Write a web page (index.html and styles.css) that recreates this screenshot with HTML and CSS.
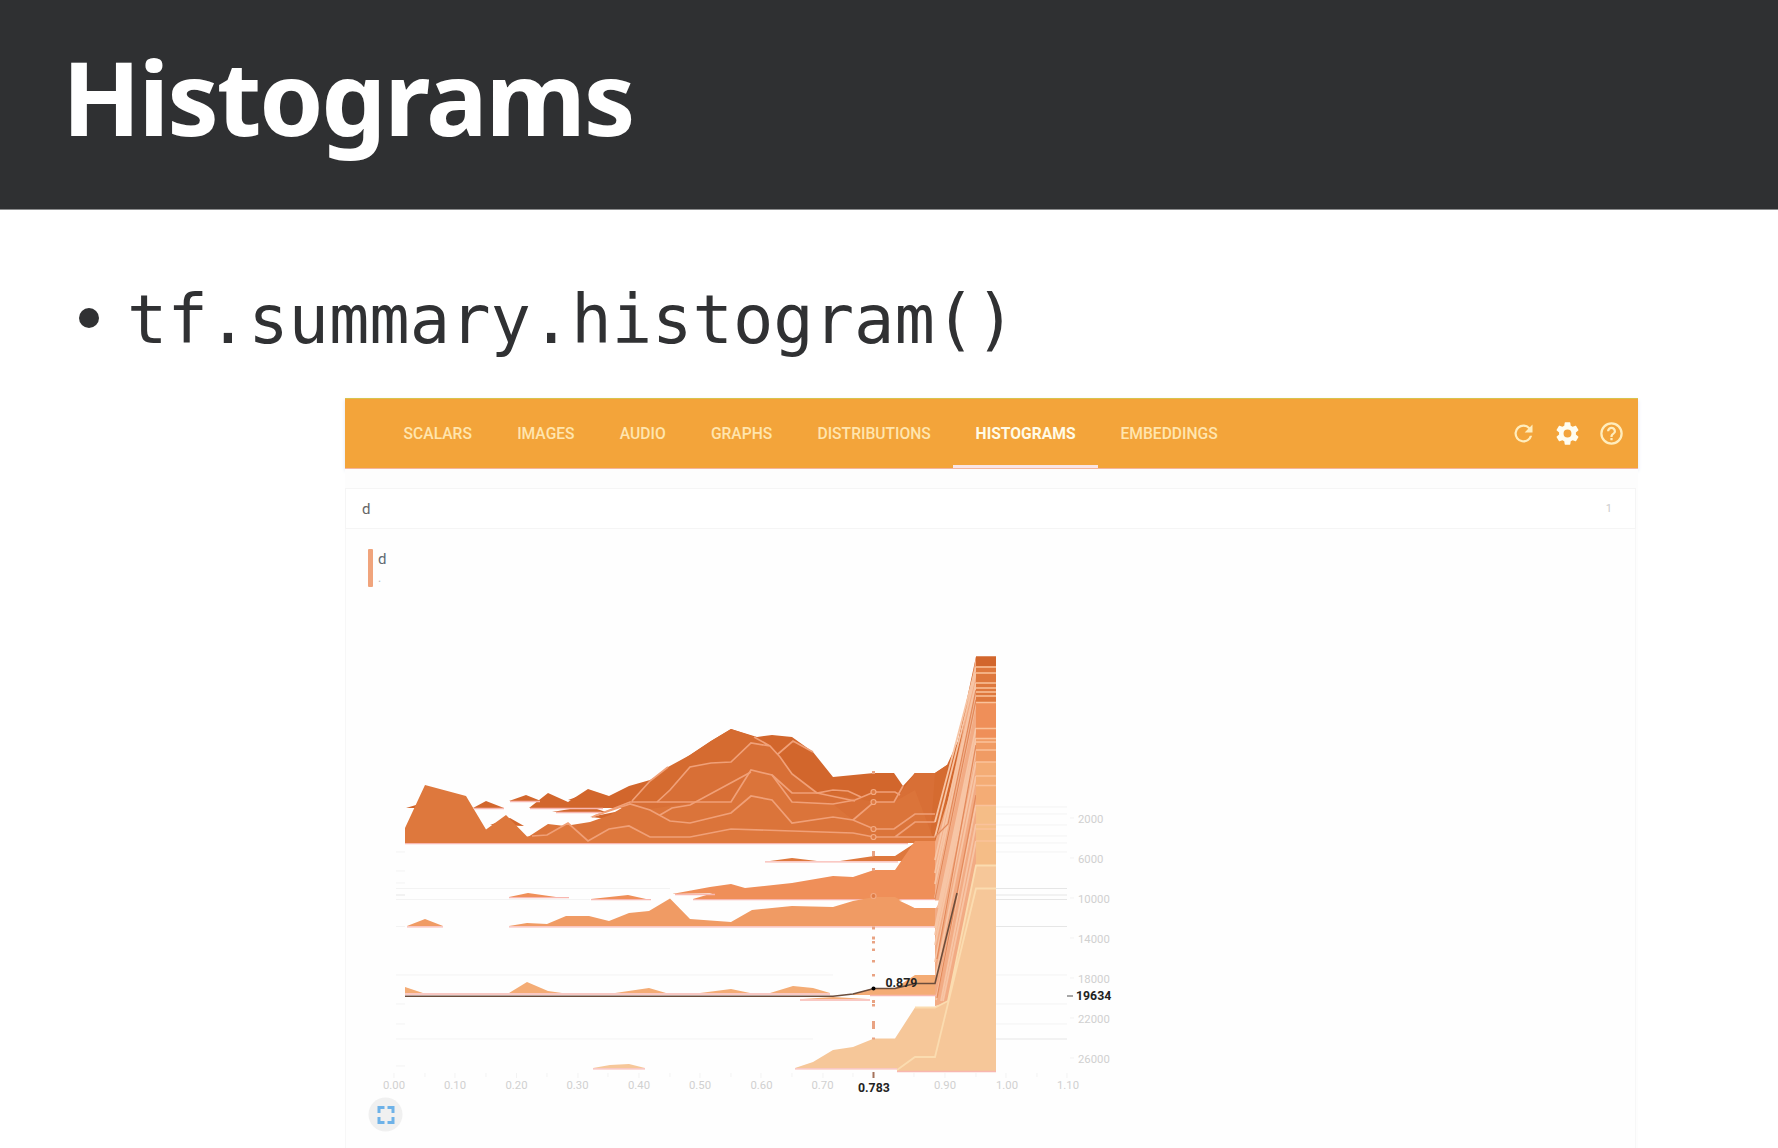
FILE: index.html
```html
<!DOCTYPE html>
<html lang="en">
<head>
<meta charset="utf-8">
<title>Histograms</title>
<link rel="stylesheet" href="styles.css">
</head>
<body>
<header class="slide-header"><h1 class="title">Histograms</h1></header>
<main class="slide">
  <div class="bullet"><span class="dot"></span><code class="code">tf.summary.histogram()</code></div>
  <section class="board">
    <nav class="toolbar">
      <div class="tabs">
        <span class="tab">SCALARS</span><span class="tab">IMAGES</span><span class="tab">AUDIO</span><span class="tab">GRAPHS</span><span class="tab">DISTRIBUTIONS</span><span class="tab active">HISTOGRAMS</span><span class="tab">EMBEDDINGS</span>
      </div>
      <div class="actions">
        <svg class="icon" viewBox="0 0 24 24"><path d="M17.65 6.35A7.96 7.96 0 0 0 12 4a8 8 0 1 0 7.73 10h-2.08A6 6 0 1 1 12 6c1.66 0 3.14.69 4.22 1.78L13 11h7V4z"/></svg>
        <svg class="icon bright" viewBox="0 0 24 24"><path d="M19.43 12.98c.04-.32.07-.64.07-.98s-.03-.66-.07-.98l2.11-1.65c.19-.15.24-.42.12-.64l-2-3.46c-.12-.22-.39-.3-.61-.22l-2.49 1c-.52-.4-1.08-.73-1.69-.98l-.38-2.65A.49.49 0 0 0 14 2h-4c-.25 0-.46.18-.49.42l-.38 2.65c-.61.25-1.17.59-1.69.98l-2.49-1c-.23-.09-.49 0-.61.22l-2 3.46c-.13.22-.07.49.12.64l2.11 1.65c-.04.32-.07.65-.07.98s.03.66.07.98l-2.11 1.65c-.19.15-.24.42-.12.64l2 3.46c.12.22.39.3.61.22l2.49-1c.52.4 1.08.73 1.69.98l.38 2.65c.03.24.24.42.49.42h4c.25 0 .46-.18.49-.42l.38-2.65c.61-.25 1.17-.59 1.69-.98l2.49 1c.23.09.49 0 .61-.22l2-3.46c.12-.22.07-.49-.12-.64zM12 15.5a3.5 3.5 0 1 1 0-7 3.5 3.5 0 0 1 0 7z"/></svg>
        <svg class="icon" viewBox="0 0 24 24"><path d="M11 18h2v-2h-2zm1-16a10 10 0 1 0 0 20 10 10 0 0 0 0-20zm0 18a8 8 0 1 1 0-16 8 8 0 0 1 0 16zm0-14a4 4 0 0 0-4 4h2c0-1.1.9-2 2-2s2 .9 2 2c0 2-3 1.75-3 5h2c0-2.25 3-2.5 3-5a4 4 0 0 0-4-4z"/></svg>
      </div>
    </nav>
    <div class="content">
      <div class="group"><span>d</span><span class="count">1</span></div>
      <div class="card">
        <div class="run"><span class="swatch"></span><div class="run-text"><span>d</span><span class="run-name">.</span></div></div>
        <svg class="chart" viewBox="346 580 1290 568">
          <g class="grid">
            <path d="M996 807H1067M996 814H1067M996 825H1067M996 836H1067M996 843H1067M996 852H1067M996 926.500H1067M996 975H1067M996 1004H1067M996 1024H1067M396 852h9M396 871h9M396 883h9M396 926.500h9M396 975h437M396 1004h9M396 1024h9M396 1039H813M396 1066h9"/>
            <path class="strong" d="M996 888.500H1067M996 895H1067M996 899.500H1067M996 926.500H1067M996 1039H1067M396 888.500h9M396 895h9M396 899.500h9"/>
            <path d="M396 888.500H670M396 899.500H590M1070 818h4M1070 858h4M1070 898h4M1070 938h4M1070 978h4M1070 1018h4M1070 1058h4"/>
            <path d="M394 1073v5M425 1073v4M455 1073v5M486 1073v4M516.500 1073v5M547 1073v4M578 1073v5M608 1073v4M639 1073v5M670 1073v4M700 1073v5M731 1073v4M761 1073v5M792 1073v4M823 1073v5M853 1073v4M914 1073v4M945 1073v5M976 1073v4M1006 1073v5M1037 1073v4M1067 1073v5"/>
          </g>
          <g class="mass">
            <path class="c1" d="M509 801l17-6 15 6zM473 808l13-7 18 7zM406 808l20-6v6zM529 808L548 793 568 802 588 789 609 796 629 786 650 780 672 767 690 755 711 741 731 729 757 737 772 735 792 737 813 752 833 777 874 773 894 773 903 786 915 773 935 773 947 765 958 741 976 656.500H996V843H630V808z"/>
            <path class="c1" d="M568 800l20-7-6 9zM552 812l36-6 18 6zM490 825l34 1-14-8zM590 817l40-8v12z"/>
            <path class="c2" d="M632 801L650 781 668 767 690 755 711 741 731 729 752 736 770 746 792 772 817 793 848 791 861 797 874 792H900L915 773H935L947 765 945 843H632z"/>
            <path class="c3" d="M630 843V803L657 802 670 790 690 767 711 763 731 762 751 743 770 746 792 774 817 793 855 798 874 802H894L915 773H935L930 843z"/>
            <path class="c4" d="M528 837L548 824 565 826 590 822 610 815 630 803 650 809 690 803 731 802 751 771 772 775 792 802 833 804 853 820 874 802H894L915 790 935 843H528z"/>
            <path class="c5" d="M405 843V828L425 785 466 796 486 829.500 506 815 527 836.500 547 835 568 823 588 841 609 829 629 826 650 837H690L731 829 853 833 874 837H935V843z"/>
          </g>
          <g class="lines">
            <path d="M632 801L650 781 668 767M592 817L630 802 690 802 731 802 751 770 772 775 792 802 833 804 855 800 874 792H895L900 795"/>
            <path d="M657 802L670 790 690 767 711 763 731 762 751 743 770 746 780 757 792 774 817 793 833 790 848 791 861 797M754 737L770 746M778 754L793 741 813 752"/>
            <path d="M660 815L672 808 690 805 751 772M772 775L792 793 817 793 855 801M594 816L630 804 650 810 670 821 690 823 731 813 751 796 772 800 792 823 833 817 853 820 874 829H894L915 814H935M853 820L874 802H894L903 786"/>
            <path d="M532 836L547 835 568 823 588 841 609 829 629 826 650 837H690L731 829 853 833 874 837H935M895 837L915 822H935"/>
          </g>
          <path class="base" d="M405 843.700H908M474 808.500h30M530 808.500h73M510 801.500h30M556 812.500h45"/>
          <path class="c5" d="M770 861L792 858 817 861zM840 861L874 856H895L915 843V861z"/>
          <path class="base" d="M765 861.800H898"/>
          <path class="c6" d="M509 897l19-4 28 4zM591 899l37-4 18 4zM672 894L710 887 731 884 745 888 792 883 833 876 853 877 800 891 720 893zM693 899L720 891 800 890 833 880 853 877 874 870H895L915 841H935L948 836 962 770V899z"/>
          <path class="base" d="M509 897.700h60M591 899.600h60M675 894.500h40M693 899.600H940"/>
          <path class="c7" d="M407 926l18-7 18 7zM509 926L527 923 547 924 566 916 589 916 609 921 629 913 649 911 670 898.500 690 919 731 922 752 910 792 906 833 907 853 901 874 897H895L915 908H940V926z"/>
          <path class="base" d="M407 926.800h36M509 926.800H935"/>
          <path class="fan-fill" d="M935 842L948 800 962 735 976 656.500V1000L935 1006z"/>
          <path class="gap" d="M899 900.500L915 908H936L940 902 939 900.500z"/>
          <g class="fan-lines">
            <path d="M935 822L976 667M935 837L976 673M935 860L976 683M935 873L976 688M935 884L976 692M935 898L976 702M938 908L976 728M935 928L976 738M935 935L976 742M935 945L976 750M935 962L976 762M936 975L976 776M936 1000L976 805M941 1001L976 824M943 1001L976 841"/>
            <path class="hot" d="M935 837L948 824 976 690M935 899L976 700M937 959L976 745M937 998L976 795"/>
          </g>
          <path class="c1" d="M976 656.500H996V684H976z"/><path class="c5" d="M976 666H996V703H976z"/><path class="c6" d="M976 702H996V763H976z"/><path class="c7" d="M976 738H996V790H976z"/><path class="c8" d="M976 762H996V842H976z"/><path class="c9" d="M976 805H996V866H976z"/>
          <path class="column-lines" d="M976 667H996M976 673H996M976 683H996M976 688H996M976 692H996M976 696H996M976 702.500H996M976 728.500H996M976 738.500H996M976 742H996M976 750H996M976 762H996M976 776H996M976 785.500H996M976 805.500H996M976 824.500H996M976 829H996M976 841H996"/>
          <path class="c8" d="M405 993v-6l18 6zM509 993L527 982 548 991 562 993zM615 993L649 988 666 993zM700 993L731 989 750 993zM770 993L793 986 813 988 830 993zM853 994L874 988 895 988 915 975H935V995H853zM803 999L833 997 868 999z"/>
          <path class="base" d="M405 994H830M800 1000H870M870 995.500H936"/>
          <path class="hover-line" d="M405 996.300H833L853 994 874 988.500H895L915 983.500H935L957 893"/>
          <path class="c10" d="M593 1068L610 1065 629 1064 645 1068zM795 1068L813 1062 833 1050 853 1047 874 1038.500H895L915 1007.500H935L948 1001 976 865.500H996V1071H897V1068z"/>
          <path class="base" d="M593 1068.800h52M795 1068.800H900M897 1071.500H996"/>
          <path class="front-line" d="M897 1070L915 1057H935L976 888.500H996M915 1007.500H935L948 1001 976 865.500H996"/>
          <g class="points"><circle cx="873.500" cy="792" r="2.500"/><circle cx="873.500" cy="802" r="2.500"/><circle cx="873.500" cy="829" r="2.500"/><circle cx="873.500" cy="837" r="2.500"/><circle cx="873.500" cy="896" r="2.500"/></g>
          <path class="dots" d="M873.500 771v3M873.500 851v5M873.500 868v3M873.500 926.500v3M873.500 936.500v3M873.500 941v2.500M873.500 948.500v2.500M873.500 960v2.500M873.500 974v2.500M873.500 1000v3M873.500 1004v2.500M873.500 1021v8M873.500 1037.500v2"/>
          <path class="mark" d="M873.500 1072v6"/><circle cx="873.500" cy="988.500" r="2"/>
          <path class="mark-dark" d="M1067 996h6"/>
          <g class="labels">
            <text x="1078" y="822.500">2000</text><text x="1078" y="862.500">6000</text><text x="1078" y="902.500">10000</text><text x="1078" y="942.500">14000</text><text x="1078" y="982.500">18000</text><text x="1078" y="1022.500">22000</text><text x="1078" y="1062.500">26000</text>
          </g>
          <g class="labels middle">
            <text x="394" y="1089">0.00</text><text x="455" y="1089">0.10</text><text x="516.500" y="1089">0.20</text><text x="577.500" y="1089">0.30</text><text x="639" y="1089">0.40</text><text x="700" y="1089">0.50</text><text x="761.500" y="1089">0.60</text><text x="822.500" y="1089">0.70</text><text x="945" y="1089">0.90</text><text x="1007" y="1089">1.00</text><text x="1068" y="1089">1.10</text>
          </g>
          <g class="strong-labels"><text x="885.500" y="987">0.879</text><text x="1076" y="1000">19634</text><text x="858" y="1091.500">0.783</text></g>
          <circle class="expand-bg" cx="385.500" cy="1114.500" r="17"/>
          <path class="expand" d="M379 1113v-5.500h5.500M387.500 1107.500h5.500v5.500M393 1117v5.500h-5.500M384.500 1122.500h-5.500v-5.500"/>
        </svg>
      </div>
    </div>
  </section>
</main>
</body>
</html>
```
FILE: styles.css
```css
* { box-sizing: border-box; }
body { margin: 0; width: 1778px; height: 1148px; overflow: hidden; background: #fff; font-family: Roboto, sans-serif; }
.slide-header { height: 210px; background: #2f3032; border-bottom: 1px solid #8b8c8d; padding: 31px 0 0 62px; }
.title { margin: 0; color: #fff; font: 700 103px/130px "Noto Sans", sans-serif; letter-spacing: -2.2px; }
.bullet { display: flex; align-items: flex-start; height: 188px; padding: 70px 0 0 79px; }
.dot { width: 20px; height: 20px; border-radius: 50%; background: #303133; margin: 28px 28px 0 0; }
.code { font: 67.1px/80px "DejaVu Sans Mono", monospace; color: #303133; }
.board { width: 1293px; margin-left: 345px; }
.toolbar { display: flex; justify-content: space-between; height: 71px; padding: 0 13px 0 36px; background: #f3a43a; border-top: 1px solid #d8c34e; border-bottom: 1px solid #f3b6a0; box-shadow: 0 2px 4px #dfe4ef; }
.tabs { display: flex; }
.tab { display: flex; align-items: center; padding: 0 22.6px 1px; color: #ffe5ae; font-size: 15.65px; font-weight: 500; }
.tab.active { color: #fffbe6; font-weight: 700; border-bottom: 3px solid #fae5e5; padding: 2px 22.2px 0; }
.actions { display: flex; align-items: center; gap: 17px; padding-bottom: 1px; }
.icon { width: 27px; height: 27px; fill: #ffedbd; }
.icon.bright { fill: #fffdf0; }
.content { height: 680px; padding-top: 19px; background: #fdfdfd; }
.group { display: flex; justify-content: space-between; align-items: center; width: 1291px; height: 41px; padding: 0 23px 0 16px; background: #fff; border: 1px solid #f5f5f5; color: #666; font-size: 15px; }
.count { color: #ccc; font-size: 11px; }
.card { width: 1291px; height: 640px; background: #fefefe; border: 1px solid #f7f7f7; border-top: 0; padding-top: 20px; }
.run { display: flex; gap: 5px; height: 38px; padding-left: 22px; }
.swatch { width: 5px; height: 38px; background: #f0a47c; border-radius: 1px; }
.run-text { display: flex; flex-direction: column; color: #626b72; font-size: 15px; line-height: 21px; }
.run-name { color: #bbb; font-size: 12px; line-height: 16px; }
.chart { display: block; width: 1290px; height: 568px; margin-top: -7px; }
.grid { fill: none; stroke: #f3f3f3; stroke-width: 1; }
.strong { stroke: #e6e6e6; }
.c1 { fill: #d2662c; } .c2 { fill: #d56b30; } .c3 { fill: #d86f36; } .c4 { fill: #db743a; } .c5 { fill: #de783d; }
.c6 { fill: #ef8f59; } .c7 { fill: #f09b64; } .c8 { fill: #f4ac75; } .c9 { fill: #f5bd87; } .c10 { fill: #f6c799; }
.lines { fill: none; stroke: #f0a078; stroke-width: 1.7; }
.base { fill: none; stroke: #f8b7b0; stroke-width: 1.3; }
.fan-fill { fill: #f2ab84; }
.fan-lines { fill: none; stroke: #f7c5a5; stroke-width: 1.8; }
.hot { stroke: #e38a5c; stroke-width: 1.3; }
.gap { fill: #fff; }
.column-lines { fill: none; stroke: #fac29b; stroke-width: 1.6; }
.hover-line { fill: none; stroke: #6b4d3c; stroke-width: 1.6; }
.front-line { fill: none; stroke: #fbdcb0; stroke-width: 1.8; }
.points { fill: #df7b44; stroke: #f3aa82; stroke-width: 1.2; }
.dots { fill: none; stroke: #e9a383; stroke-width: 3; }
.mark { stroke: #a5725b; stroke-width: 2; }
.mark-dark { stroke: #777; stroke-width: 1.3; }
.labels { fill: #d0d0d0; font-size: 11.3px; }
.middle { text-anchor: middle; }
.strong-labels { fill: #222; font-size: 12.3px; font-weight: 700; }
.expand-bg { fill: #f0f0f0; }
.expand { fill: none; stroke: #6eb2e8; stroke-width: 3; }
```
